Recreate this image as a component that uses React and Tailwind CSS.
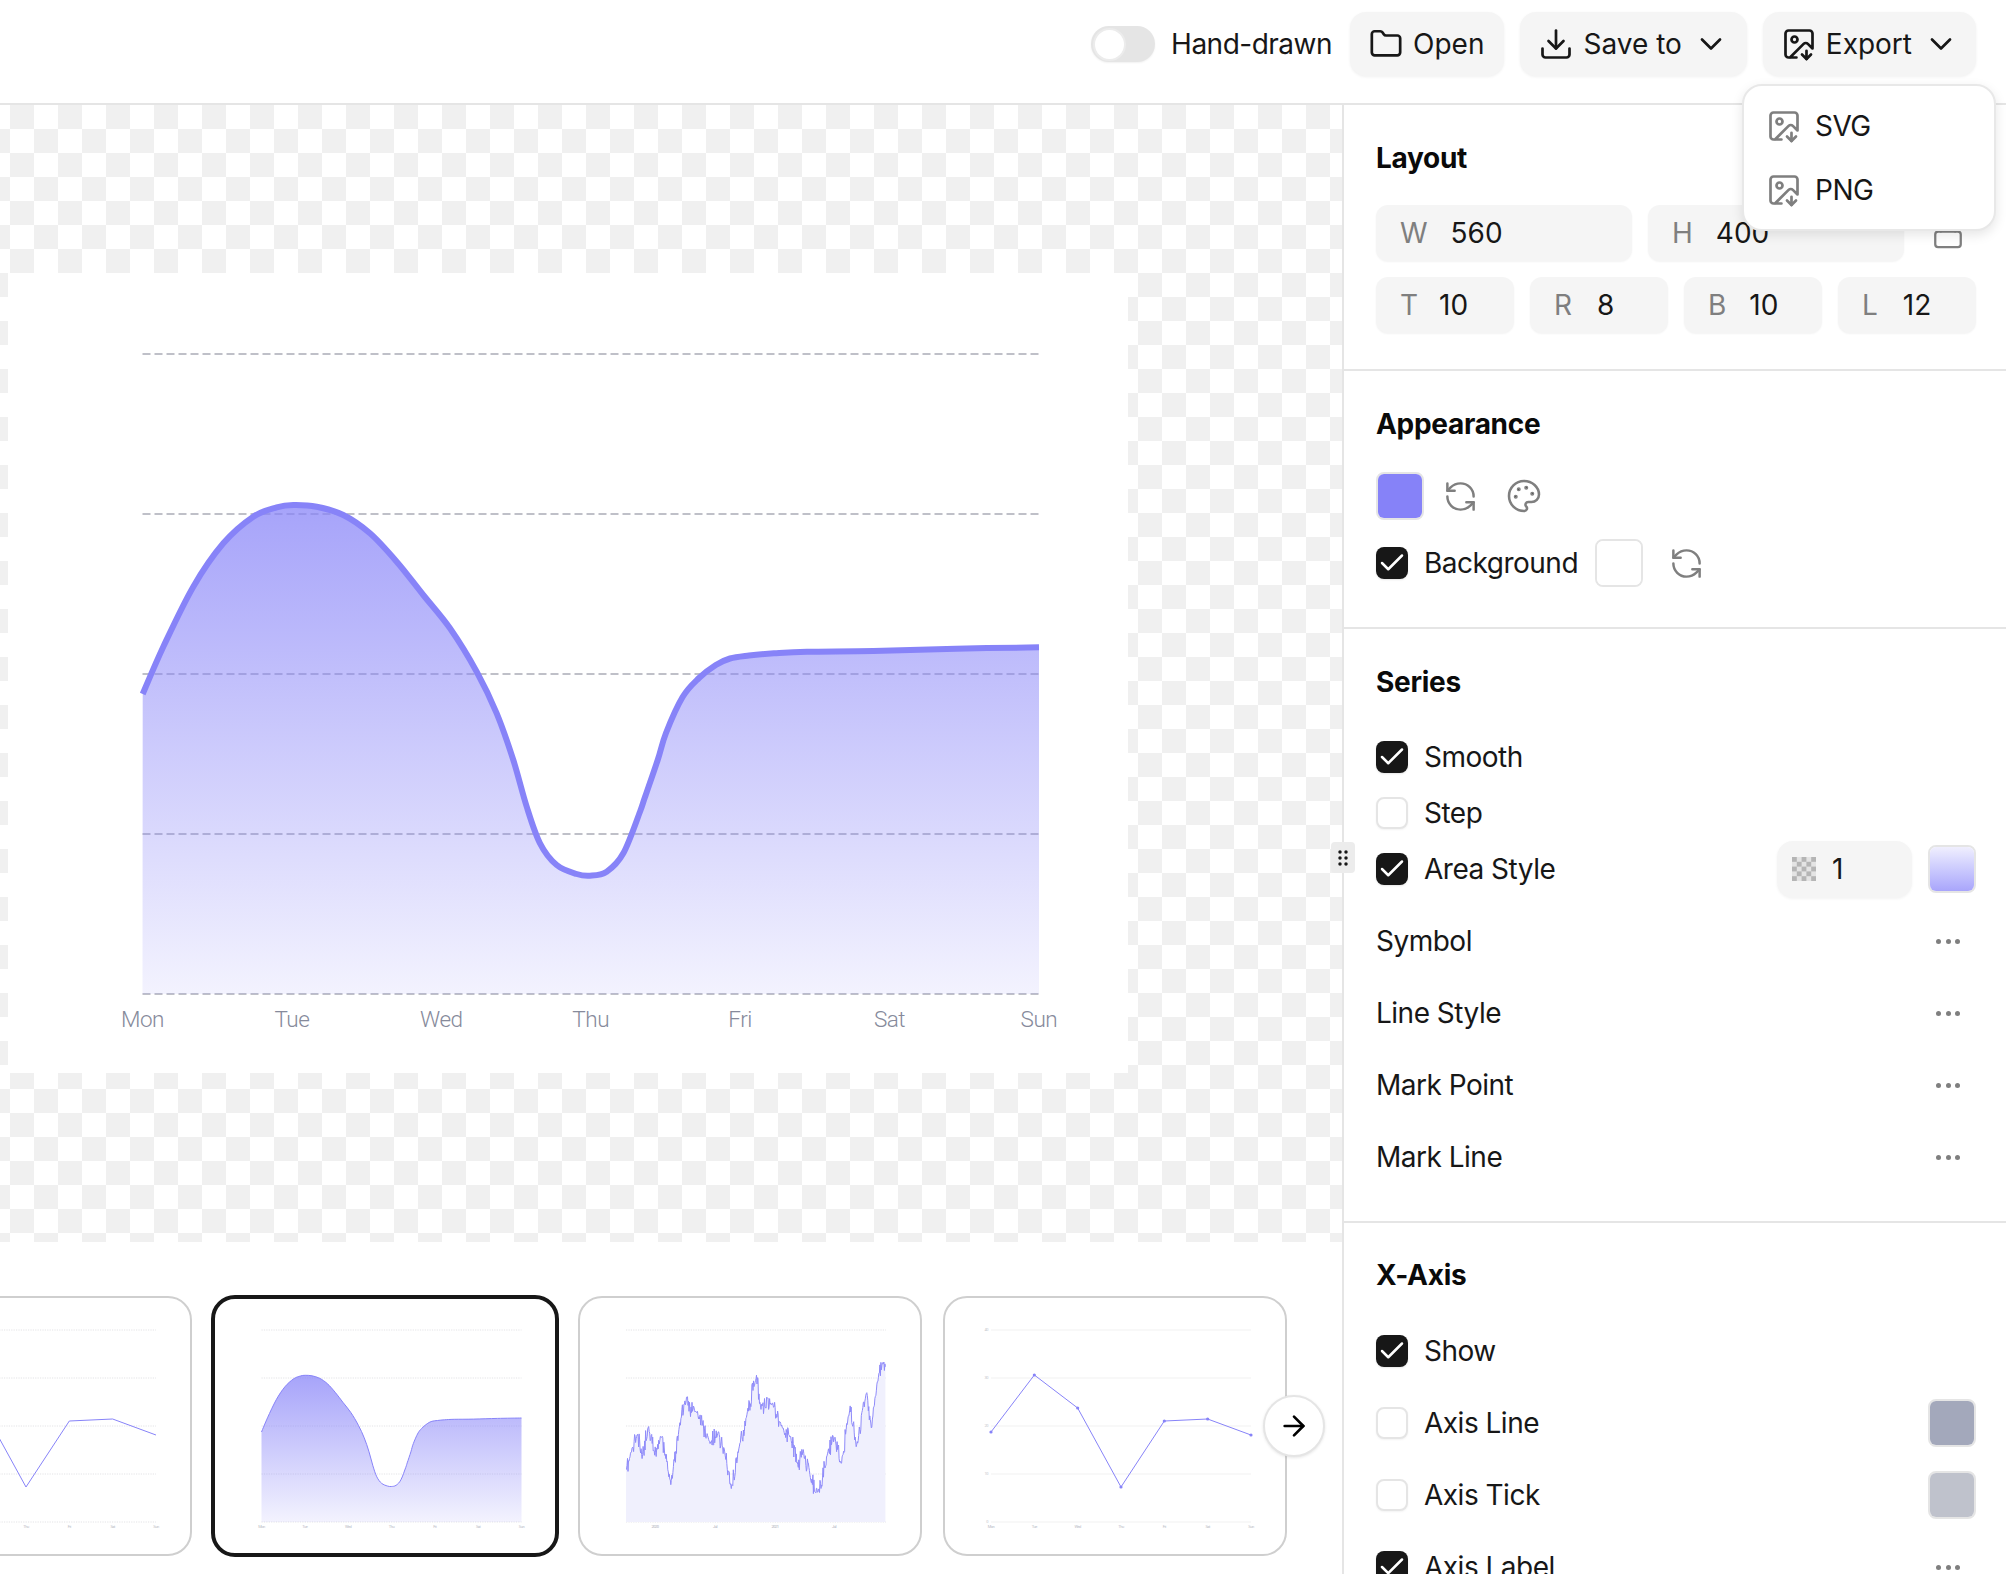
import React from "react";
import { Folder, Download, ChevronDown, ImageDown, RefreshCcw, Palette, Lock, Check, ArrowRight } from "lucide-react";

const RAW_MAIN = [
  [38,612],[100,470],[190,290],[280,160],[370,80],[440,52],[490,45],[560,50],[640,75],[720,130],[800,215],[880,315],[960,415],[1040,545],[1100,670],[1150,810],[1190,950],[1230,1060],[1280,1125],[1340,1152],[1380,1157],[1430,1145],[1480,1090],[1530,965],
].map(([x, y]) => [130 + x / 3, 490 + y / 3]).concat([
  [645,797],[657.7,760],[666,733],[682.6,697],[699,678],[715.8,665],[730,658.5],[749,655.5],[774,653.3],[807,651.7],[873.4,651],[956,648.7],[1039,647.3],
]);

function smooth(pts) {
  let d = `M${pts[0][0].toFixed(1)} ${pts[0][1].toFixed(1)}`;
  for (let i = 0; i < pts.length - 1; i++) {
    const p0 = pts[Math.max(i - 1, 0)], p1 = pts[i], p2 = pts[i + 1], p3 = pts[Math.min(i + 2, pts.length - 1)];
    const c1x = p1[0] + (p2[0] - p0[0]) / 6, c1y = p1[1] + (p2[1] - p0[1]) / 6;
    const c2x = p2[0] - (p3[0] - p1[0]) / 6, c2y = p2[1] - (p3[1] - p1[1]) / 6;
    d += `C${c1x.toFixed(1)} ${c1y.toFixed(1)} ${c2x.toFixed(1)} ${c2y.toFixed(1)} ${p2[0].toFixed(1)} ${p2[1].toFixed(1)}`;
  }
  return d;
}

const DAYS = ["Mon", "Tue", "Wed", "Thu", "Fri", "Sat", "Sun"];
const LILAC = "#8783f8";

function MainChart() {
  const mainLine = smooth(RAW_MAIN);
  return (
    <svg width="1120" height="800" viewBox="8 273 1120 800" className="block">
      <defs>
        <linearGradient id="mainFill" gradientUnits="userSpaceOnUse" x1="0" y1="504" x2="0" y2="994">
          <stop offset="0" stopColor={LILAC} stopOpacity="0.74" />
          <stop offset="1" stopColor={LILAC} stopOpacity="0.1" />
        </linearGradient>
      </defs>
      {[354, 514, 674, 834, 994].map((y) => (
        <line key={y} x1="142.5" x2="1039" y1={y} y2={y} stroke="#bfc0c8" strokeWidth="2" strokeDasharray="8 4" />
      ))}
      <path d={`${mainLine}L1039 994L142.5 994Z`} fill="url(#mainFill)" />
      <path d={mainLine} fill="none" stroke={LILAC} strokeWidth="6" />
      {DAYS.map((day, i) => (
        <text key={day} x={142.5 + i * 149.4} y="1027" textAnchor="middle" fontSize="22.5" fontWeight="300" fill="#868a9b" fontFamily="Roboto, sans-serif">
          {day}
        </text>
      ))}
    </svg>
  );
}

function Grid({ light }) {
  return [34, 82, 130, 178, 226].map((y) => (
    <line key={y} x1="48" x2="308" y1={y} y2={y} stroke={light ? "#ededed" : "#dcdcdf"} strokeWidth="0.8" strokeDasharray={light ? "" : "1.2 1.2"} />
  ));
}

function DayLabels({ from = 0 }) {
  return DAYS.map((day, i) =>
    i < from ? null : (
      <text key={day} x={48 + i * 43.33} y="232" textAnchor="middle" fontSize="4" fill="#b9bcc6" fontFamily="Roboto, sans-serif">
        {day}
      </text>
    )
  );
}

const LINE_Y = [136, 79, 112, 191, 125, 123, 139];

function LineThumb({ dots, yLabels, from }) {
  const pts = LINE_Y.map((y, i) => [48 + i * 43.33, y]);
  return (
    <>
      <Grid light={dots} />
      {yLabels &&
        ["40", "30", "20", "10", "0"].map((t, i) => (
          <text key={t} x="45" y={35 + i * 48} textAnchor="end" fontSize="4" fill="#c4c6ce" fontFamily="Roboto, sans-serif">
            {t}
          </text>
        ))}
      <polyline points={pts.map((p) => p.join(",")).join(" ")} fill="none" stroke={LILAC} strokeWidth="1" />
      {dots && pts.map((p) => <circle key={p[0]} cx={p[0]} cy={p[1]} r="1.6" fill={LILAC} />)}
      <DayLabels from={from} />
    </>
  );
}

function AreaThumb() {
  const pts = RAW_MAIN.map(([x, y]) => [48 + ((x - 142.5) * 260) / 896.5, 34 + ((y - 354) * 192) / 640]);
  const d = smooth(pts);
  return (
    <>
      <defs>
        <linearGradient id="thumbFill" gradientUnits="userSpaceOnUse" x1="0" y1="79" x2="0" y2="226">
          <stop offset="0" stopColor={LILAC} stopOpacity="0.74" />
          <stop offset="1" stopColor={LILAC} stopOpacity="0.1" />
        </linearGradient>
      </defs>
      <Grid />
      <path d={`${d}L308 226L48 226Z`} fill="url(#thumbFill)" />
      <path d={d} fill="none" stroke={LILAC} strokeWidth="1" />
      <DayLabels />
    </>
  );
}

const WALK = [[133,605],[145,540],[155,495],[165,560],[178,465],[190,550],[202,495],[222,640],[240,460],[250,395],[275,430],[300,520],[316,490],[330,550],[342,655],[358,530],[375,420],[392,320],[400,410],[425,400],[445,480],[460,500],[475,590],[485,540],[500,630],[515,668],[535,540],[548,500],[560,585],[578,410],[590,525],[610,370],[620,470],[635,310],[642,282],[648,290]];

function StockThumb() {
  const pts = [];
  let seed = 11;
  const rnd = () => {
    seed = (seed * 16807) % 2147483647;
    return seed / 2147483647 - 0.5;
  };
  for (let s = 0; s < WALK.length - 1; s++) {
    const [x0, y0] = WALK[s], [x1, y1] = WALK[s + 1];
    const n = Math.max(2, Math.round(x1 - x0));
    for (let k = 0; k < n; k++) {
      const t = k / n;
      const zy = y0 + (y1 - y0) * t + rnd() * 60 * Math.sin(Math.PI * t + 0.25);
      pts.push([x0 + (x1 - x0) * t, zy]);
    }
  }
  pts.push([648, 290]);
  const mapped = pts.map(([zx, zy]) => [(zx / 1.985 + 560 - 579).toFixed(1), (zy / 3 + 1270 - 1296).toFixed(1)]);
  const line = mapped.map((p) => p.join(",")).join(" ");
  const left = mapped[0][0], right = mapped[mapped.length - 1][0];
  return (
    <>
      <Grid />
      <polygon points={`${line} ${right},226 ${left},226`} fill="#f0f0fd" />
      <polyline points={line} fill="none" stroke="#8f8bf9" strokeWidth="1" />
      {[["2020", 77], ["Jul", 137], ["2021", 197], ["Jul", 256]].map(([t, x]) => (
        <text key={x} x={x} y="232" textAnchor="middle" fontSize="4" fill="#a9acb8" fontFamily="Roboto, sans-serif">
          {t}
        </text>
      ))}
    </>
  );
}

function ThumbCard({ selected, children }) {
  if (selected) {
    return (
      <div className="-mx-[2px] -my-px h-[262px] w-[348px] shrink-0 overflow-hidden rounded-[24px] border-4 border-[#171717] bg-white">
        <svg viewBox="1.5 3 340 254" className="block h-[254px] w-[340px]">{children}</svg>
      </div>
    );
  }
  return (
    <div className="h-[260px] w-[344px] shrink-0 overflow-hidden rounded-[24px] border-2 border-[#cfcfcf] bg-white">
      <svg viewBox="2 2 340 256" className="block h-[256px] w-[340px]">{children}</svg>
    </div>
  );
}

function HeaderButton({ icon, label, chevron, className }) {
  return (
    <button className={`flex h-[64px] items-center rounded-[16px] bg-[#f5f5f5] tracking-normal text-[#171717] shadow-[0_1px_3px_rgba(0,0,0,0.06)] ${className}`}>
      {icon}
      <span>{label}</span>
      {chevron && <ChevronDown size={36} strokeWidth={1.8} className="ml-[2px]" />}
    </button>
  );
}

function Field({ letter, value, gap, className }) {
  return (
    <div className={`flex h-[56px] items-center rounded-[12px] bg-[#f5f5f5] pl-[24px] tracking-normal shadow-[0_1px_2px_rgba(0,0,0,0.05)] ${gap} ${className}`}>
      <span className="text-[#7f7f7f]">{letter}</span>
      <span className="text-[#171717]">{value}</span>
    </div>
  );
}

function CheckBox({ on }) {
  return on ? (
    <span className="flex h-[32px] w-[32px] shrink-0 items-center justify-center rounded-[8px] bg-[#171717] shadow-[0_1px_2px_rgba(0,0,0,0.1)]">
      <Check size={30} strokeWidth={2} color="#fff" />
    </span>
  ) : (
    <span className="block h-[32px] w-[32px] shrink-0 rounded-[8px] border-2 border-[#e5e5e5] bg-white shadow-[0_1px_2px_rgba(0,0,0,0.05)]" />
  );
}

function Swatch({ className }) {
  return (
    <span className="block h-[48px] w-[48px] shrink-0 rounded-[8px] border-2 border-[#e5e5e5] bg-white">
      <span className={`block h-full w-full rounded-[6px] ${className}`} />
    </span>
  );
}

function Dots() {
  return (
    <span className="mr-[16px] flex w-[24px] justify-between">
      <span className="h-[5px] w-[5px] rounded-full bg-[#7f7f7f]" />
      <span className="h-[5px] w-[5px] rounded-full bg-[#7f7f7f]" />
      <span className="h-[5px] w-[5px] rounded-full bg-[#7f7f7f]" />
    </span>
  );
}

function CheckRow({ label, on, h, right }) {
  return (
    <div className={`flex items-center ${h}`}>
      <CheckBox on={on} />
      <span className="ml-[16px] flex-1 text-[#171717]">{label}</span>
      {right}
    </div>
  );
}

function MoreRow({ label }) {
  return (
    <div className="flex h-[72px] items-center justify-between text-[#171717]">
      <span>{label}</span>
      <Dots />
    </div>
  );
}

function Title({ children }) {
  return <h2 className="h-[36px] text-[28px] leading-[36px] font-bold tracking-[-0.3px] text-[#0a0a0a]">{children}</h2>;
}

function MiniChecker() {
  const cells = [];
  for (let r = 0; r < 5; r++) for (let c = 0; c < 5; c++) if ((r + c) % 2 === 0) cells.push([c, r]);
  return (
    <svg width="24" height="24" viewBox="0 0 5 5" className="block shrink-0">
      <rect width="5" height="5" fill="#e4e4e4" />
      {cells.map(([c, r]) => (
        <rect key={`${c}-${r}`} x={c} y={r} width="1" height="1" fill="#b5b5b5" />
      ))}
    </svg>
  );
}

function MenuItem({ label }) {
  return (
    <div className="flex h-[64px] items-center gap-[12px] pl-[22px] text-[#171717]">
      <ImageDown size={36} strokeWidth={1.8} color="#7f7f7f" />
      <span className="ml-px">{label}</span>
    </div>
  );
}

export default function App() {
  return (
    <div className="relative flex h-[1574px] w-[2006px] flex-col overflow-hidden bg-white text-[28px] leading-[36px] tracking-[-0.5px] [font-family:Inter,sans-serif]">
      <header className="flex h-[105px] shrink-0 items-start justify-end gap-[16px] border-b-2 border-[#e5e5e5] pt-[12px] pr-[30px]">
        <div className="mr-[2px] flex h-[64px] items-center gap-[16px]">
          <span className="flex h-[36px] w-[64px] items-center rounded-full bg-[#e5e5e5] pl-[2px] shadow-[0_1px_2px_rgba(0,0,0,0.06)]">
            <span className="block h-[33px] w-[33px] rounded-full border-2 border-[#ececec] bg-white" />
          </span>
          <span className="text-[#171717]">Hand-drawn</span>
        </div>
        <HeaderButton className="gap-[10px] pr-[20px] pl-[19px]" label="Open" icon={<Folder size={34} strokeWidth={1.9} />} />
        <HeaderButton className="gap-[9px] pr-[18px] pl-[18px]" label="Save to" chevron icon={<Download size={36} strokeWidth={1.8} />} />
        <HeaderButton className="gap-[9px] pr-[17px] pl-[18px]" label="Export" chevron icon={<ImageDown size={36} strokeWidth={1.8} />} />
      </header>

      <div className="flex min-h-0 flex-1">
        <main className="relative flex w-[1342px] shrink-0 flex-col">
          <div className="h-[1137px] shrink-0 bg-[conic-gradient(#f0f0f0_25%,#fff_0_50%,#f0f0f0_0_75%,#fff_0)] bg-[length:48px_48px] bg-[position:-14px_0px] pt-[168px] pl-[8px]">
            <div className="h-[800px] w-[1120px] bg-white">
              <MainChart />
            </div>
          </div>
          <div className="-ml-[152px] flex gap-[21px] pt-[54px]">
            <ThumbCard><LineThumb from={3} /></ThumbCard>
            <ThumbCard selected><AreaThumb /></ThumbCard>
            <ThumbCard><StockThumb /></ThumbCard>
            <ThumbCard><LineThumb dots yLabels /></ThumbCard>
          </div>
          <button className="absolute top-[1290px] left-[1263px] flex h-[62px] w-[62px] items-center justify-center rounded-full border-2 border-[#e5e5e5] bg-white shadow-[0_1px_3px_rgba(0,0,0,0.1)]">
            <ArrowRight size={32} strokeWidth={2} color="#000" />
          </button>
          <span className="absolute top-[737px] left-[1331px] z-10 flex h-[31px] w-[24px] items-center justify-center rounded-[4px] bg-[#ececec]">
            <svg width="10" height="16" viewBox="0 0 10 16" fill="#171717">
              <circle cx="2" cy="2" r="1.75" /><circle cx="8" cy="2" r="1.75" />
              <circle cx="2" cy="8" r="1.75" /><circle cx="8" cy="8" r="1.75" />
              <circle cx="2" cy="14" r="1.75" /><circle cx="8" cy="14" r="1.75" />
            </svg>
          </span>
        </main>

        <aside className="w-[664px] overflow-hidden border-l-2 border-[#e5e5e5] bg-white">
          <section className="h-[266px] border-b-2 border-[#e5e5e5] pt-[35px] pr-[30px] pl-[32px]">
            <Title>Layout</Title>
            <div className="mt-[29px] flex items-center gap-[16px]">
              <Field letter="W" value="560" gap="gap-[23px]" className="w-[256px]" />
              <Field letter="H" value="400" gap="gap-[23px]" className="w-[256px]" />
              <Lock size={34} strokeWidth={1.6} color="#7f7f7f" className="ml-[11px]" />
            </div>
            <div className="mt-[16px] grid grid-cols-4 gap-[16px]">
              <Field letter="T" value="10" gap="gap-[21px]" />
              <Field letter="R" value="8" gap="gap-[25px]" />
              <Field letter="B" value="10" gap="gap-[23px]" />
              <Field letter="L" value="12" gap="gap-[25px]" />
            </div>
          </section>

          <section className="h-[258px] border-b-2 border-[#e5e5e5] pt-[35px] pr-[30px] pl-[32px]">
            <Title>Appearance</Title>
            <div className="mt-[30px] flex h-[48px] items-center">
              <Swatch className="bg-[#8682f8]" />
              <RefreshCcw size={35} strokeWidth={1.7} color="#7f7f7f" className="ml-[19px]" />
              <Palette size={36} strokeWidth={1.7} color="#7f7f7f" className="ml-[28px]" />
            </div>
            <div className="mt-[19px] flex h-[48px] items-center">
              <CheckBox on />
              <span className="ml-[16px] text-[#171717]">Background</span>
              <span className="ml-[17px]"><Swatch className="bg-white" /></span>
              <RefreshCcw size={35} strokeWidth={1.7} color="#7f7f7f" className="ml-[26px]" />
            </div>
          </section>

          <section className="h-[594px] border-b-2 border-[#e5e5e5] pt-[35px] pr-[30px] pl-[32px]">
            <Title>Series</Title>
            <div className="mt-[29px]">
              <CheckRow label="Smooth" on h="h-[56px]" />
              <CheckRow label="Step" h="h-[56px]" />
              <CheckRow
                label="Area Style"
                on
                h="h-[56px]"
                right={
                  <span className="flex items-center gap-[16px]">
                    <span className="flex h-[57px] w-[135px] items-center gap-[16px] rounded-[16px] bg-[#f5f5f5] pl-[15px] shadow-[0_1px_3px_rgba(0,0,0,0.05)]">
                      <MiniChecker />
                      <span className="text-[#171717]">1</span>
                    </span>
                    <Swatch className="bg-gradient-to-b from-[#f0effe] to-[#a9a5fb]" />
                  </span>
                }
              />
            </div>
            <div className="mt-[8px]">
              <MoreRow label="Symbol" />
              <MoreRow label="Line Style" />
              <MoreRow label="Mark Point" />
              <MoreRow label="Mark Line" />
            </div>
          </section>

          <section className="pt-[34px] pr-[30px] pl-[32px]">
            <Title>X-Axis</Title>
            <div className="mt-[22px]">
              <CheckRow label="Show" on h="h-[72px]" />
              <CheckRow label="Axis Line" h="h-[72px]" right={<Swatch className="bg-[#a3a8bb]" />} />
              <CheckRow label="Axis Tick" h="h-[72px]" right={<Swatch className="bg-[#bfc2cc]" />} />
              <CheckRow label="Axis Label" on h="h-[72px]" right={<Dots />} />
            </div>
          </section>
        </aside>
      </div>

      <div className="absolute top-[84px] left-[1742px] z-20 flex h-[147px] w-[254px] flex-col justify-center rounded-[20px] border-2 border-[#e8e8e8] bg-white shadow-[0_4px_12px_rgba(0,0,0,0.1)]">
        <MenuItem label="SVG" />
        <MenuItem label="PNG" />
      </div>
    </div>
  );
}
